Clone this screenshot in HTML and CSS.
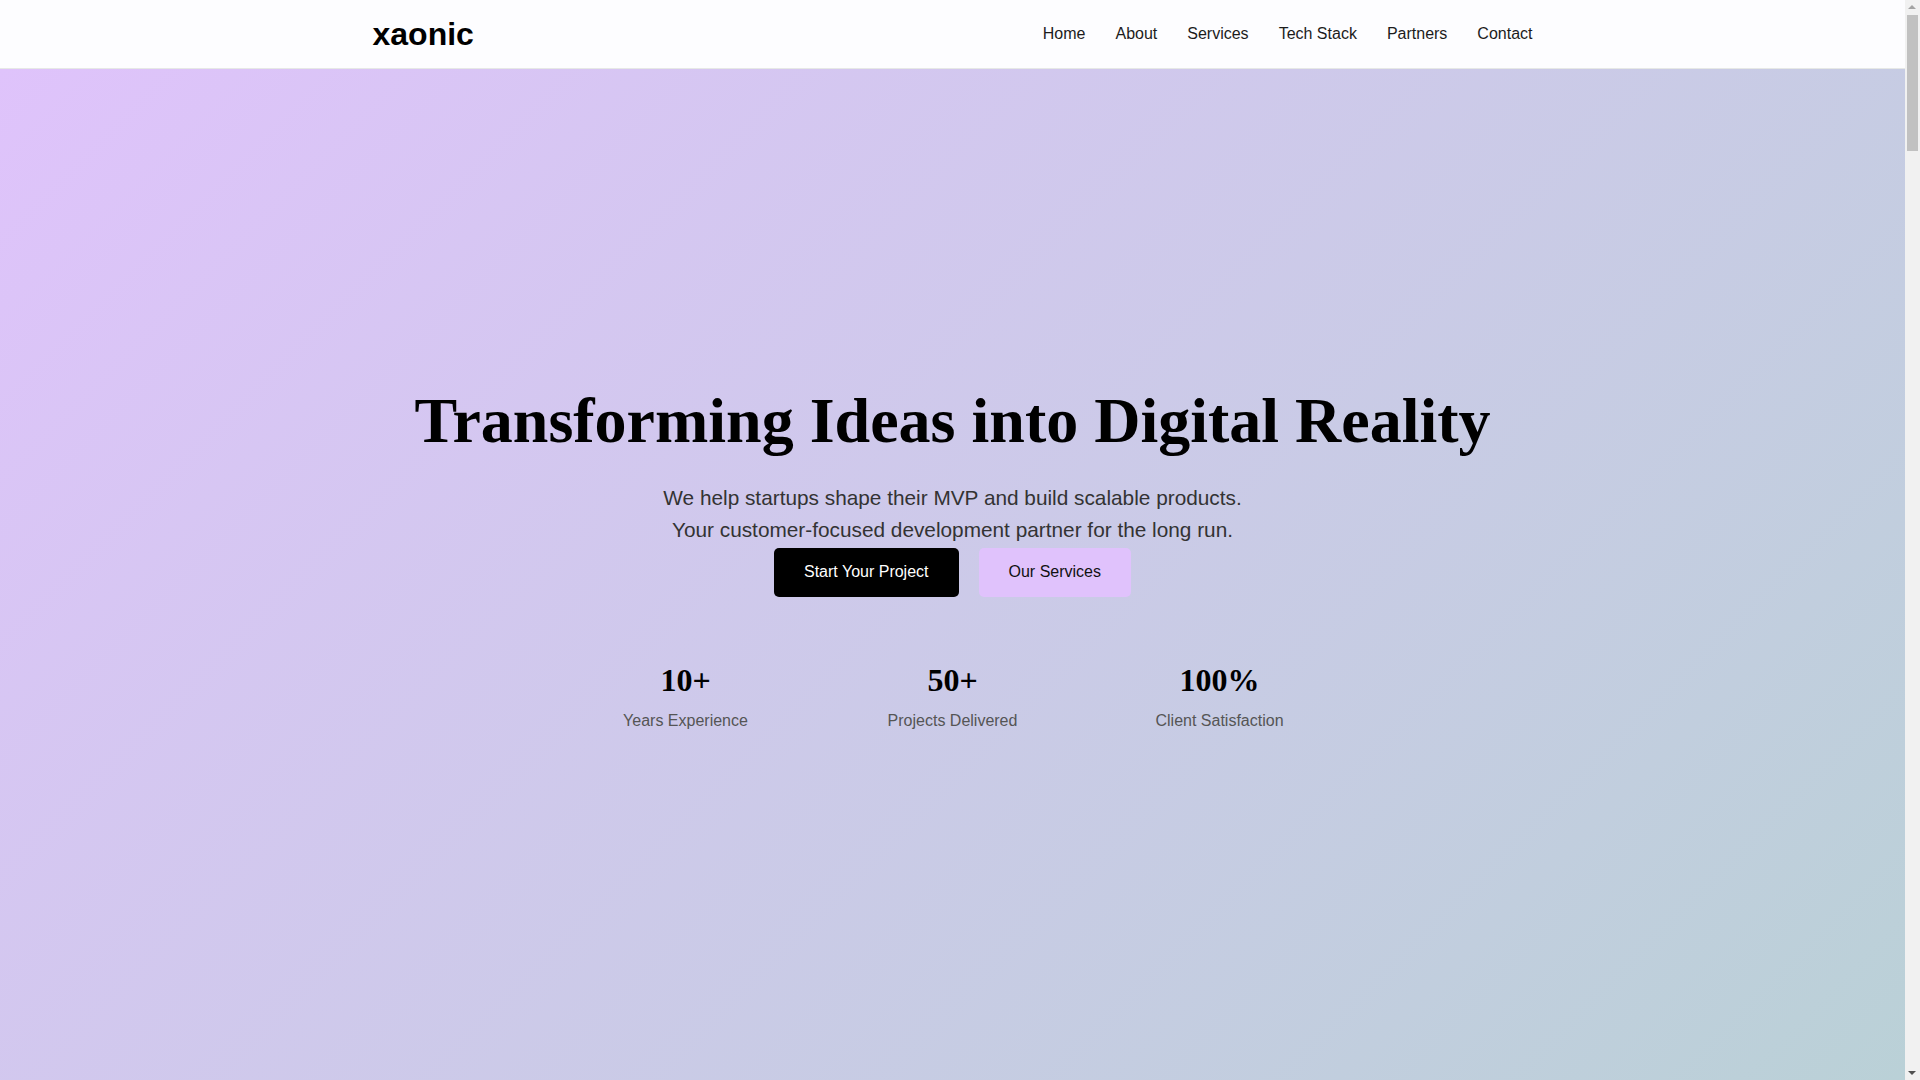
FILE: index.html
```html
<!DOCTYPE html>
<html lang="en">
<head>
<meta charset="utf-8">
<title>xaonic</title>
<link rel="stylesheet" href="styles.css">
</head>
<body>
<header class="site-header">
  <div class="container header-inner">
    <a class="logo" href="#">xaonic</a>
    <nav class="nav">
      <a href="#home">Home</a>
      <a href="#about">About</a>
      <a href="#services">Services</a>
      <a href="#tech">Tech Stack</a>
      <a href="#partners">Partners</a>
      <a href="#contact">Contact</a>
    </nav>
  </div>
</header>

<main>
  <section class="hero" id="home">
    <h1 class="hero-title">Transforming Ideas into Digital Reality</h1>
    <p class="hero-sub">We help startups shape their MVP and build scalable products.<br>Your customer-focused development partner for the long run.</p>
    <div class="hero-actions">
      <a class="btn btn-dark" href="#contact">Start Your Project</a>
      <a class="btn btn-light" href="#services">Our Services</a>
    </div>
    <div class="stats">
      <div class="stat">
        <div class="stat-num">10+</div>
        <div class="stat-label">Years Experience</div>
      </div>
      <div class="stat">
        <div class="stat-num">50+</div>
        <div class="stat-label">Projects Delivered</div>
      </div>
      <div class="stat">
        <div class="stat-num">100%</div>
        <div class="stat-label">Client Satisfaction</div>
      </div>
    </div>
  </section>

  <section class="section section-about" id="about">
    <div class="container">
      <h2 class="section-title">About Us</h2>
      <p class="section-text">We are a team of engineers, designers and product thinkers who help founders turn early ideas into products that customers love.</p>
    </div>
  </section>

  <section class="section section-services" id="services">
    <div class="container">
      <h2 class="section-title">Our Services</h2>
      <div class="cards">
        <div class="card"><h3>MVP Development</h3><p>Validate your idea quickly with a focused first version.</p></div>
        <div class="card"><h3>Product Scaling</h3><p>Architecture and infrastructure that grows with you.</p></div>
        <div class="card"><h3>UI/UX Design</h3><p>Interfaces that are simple, clear and delightful.</p></div>
      </div>
    </div>
  </section>

  <section class="section section-tech" id="tech">
    <div class="container">
      <h2 class="section-title">Tech Stack</h2>
      <p class="section-text">React, Next.js, Node.js, Python, PostgreSQL, AWS and more.</p>
    </div>
  </section>

  <section class="section section-partners" id="partners">
    <div class="container">
      <h2 class="section-title">Partners</h2>
      <p class="section-text">Trusted by startups and growing companies worldwide.</p>
    </div>
  </section>

  <section class="section section-contact" id="contact">
    <div class="container">
      <h2 class="section-title">Contact</h2>
      <p class="section-text">Tell us about your project and we will get back to you.</p>
    </div>
  </section>
</main>

<footer class="site-footer">
  <div class="container">© xaonic. All rights reserved.</div>
</footer>

<div class="scrollbar" aria-hidden="true">
  <span class="scroll-arrow scroll-arrow-up"></span>
  <span class="scroll-thumb"></span>
  <span class="scroll-arrow scroll-arrow-down"></span>
</div>
</body>
</html>
```

FILE: styles.css
```css
* {
  box-sizing: border-box;
}

html, body {
  margin: 0;
  padding: 0;
}

body {
  font-family: "Liberation Sans", Arial, sans-serif;
  color: #111;
  background: #fff;
  margin-right: 15px;
}

a {
  text-decoration: none;
  color: inherit;
}

.container {
  max-width: 1200px;
  margin: 0 auto;
  padding: 0 20px;
}

.site-header {
  background: #fdfdff;
  border-bottom: 1px solid #e6e8e6;
}

.header-inner {
  height: 68px;
  display: flex;
  align-items: center;
  justify-content: space-between;
}

.logo {
  font-size: 32px;
  font-weight: 700;
  color: #000;
  line-height: 1.15;
}

.nav {
  display: flex;
  gap: 30px;
}

.nav a {
  font-size: 16px;
  line-height: 1.15;
  color: #1c1c1c;
}

.hero {
  min-height: 1080px;
  padding: 314px 20px 0;
  background: linear-gradient(135deg, #dfc3fb 0%, #b9d1d6 100%);
  display: flex;
  flex-direction: column;
  align-items: center;
  text-align: center;
}

.hero-title {
  font-family: "Liberation Serif", "Times New Roman", serif;
  font-size: 64px;
  font-weight: 700;
  line-height: 1.2;
  margin: 0 0 22px;
  color: #000;
}

.hero-sub {
  font-size: 20.8px;
  line-height: 1.55;
  color: #333;
  margin: 0 0 2px;
}

.hero-actions {
  display: flex;
  gap: 20px;
  justify-content: center;
}

.btn {
  display: inline-block;
  font-size: 16px;
  line-height: 1.15;
  padding: 15px 30px;
  border-radius: 5px;
}

.btn-dark {
  background: #000;
  color: #fff;
}

.btn-light {
  background: #e0c2fc;
  color: #111;
}

.stats {
  margin-top: 64px;
  display: grid;
  grid-template-columns: repeat(3, 267px);
  justify-content: center;
}

.stat {
  text-align: center;
}

.stat-num {
  font-family: "Liberation Serif", "Times New Roman", serif;
  font-size: 32px;
  font-weight: 700;
  line-height: 1.2;
  color: #000;
}

.stat-label {
  margin-top: 12px;
  font-size: 16px;
  line-height: 1.2;
  color: #555;
}

.section {
  padding: 100px 0;
}

.section-about {
  min-height: 1300px;
  background: #fff;
}

.section-services {
  min-height: 1600px;
  background: #f8f6fc;
}

.section-tech {
  min-height: 1200px;
  background: #fff;
}

.section-partners {
  min-height: 1100px;
  background: #f8f6fc;
}

.section-contact {
  min-height: 1500px;
  background: #fff;
}

.section-title {
  font-family: "Liberation Serif", "Times New Roman", serif;
  font-size: 40px;
  margin: 0 0 24px;
  text-align: center;
}

.section-text {
  font-size: 18px;
  line-height: 1.6;
  color: #444;
  text-align: center;
  margin: 0;
}

.cards {
  display: grid;
  grid-template-columns: repeat(3, 1fr);
  gap: 30px;
}

.card {
  background: #fff;
  border-radius: 8px;
  padding: 30px;
  box-shadow: 0 2px 10px rgba(0, 0, 0, 0.06);
}

.card h3 {
  margin: 0 0 12px;
  font-size: 20px;
}

.card p {
  margin: 0;
  color: #555;
  line-height: 1.5;
}

.site-footer {
  background: #111;
  color: #ccc;
  padding: 200px 0 250px;
  font-size: 14px;
  text-align: center;
}

/* visual replica of the browser scrollbar shown in the reference */
.scrollbar {
  position: fixed;
  top: 0;
  right: 0;
  width: 15px;
  height: 100vh;
  background: #f1f1f1;
  z-index: 10;
}

.scroll-thumb {
  position: absolute;
  top: 15px;
  left: 2px;
  width: 11px;
  height: 136px;
  background: #c1c1c1;
}

.scroll-arrow {
  position: absolute;
  left: 3px;
  width: 0;
  height: 0;
  border-left: 4.5px solid transparent;
  border-right: 4.5px solid transparent;
}

.scroll-arrow-up {
  top: 5px;
  border-bottom: 4px solid #a3a3a3;
}

.scroll-arrow-down {
  bottom: 5px;
  border-top: 4px solid #505050;
}
```
